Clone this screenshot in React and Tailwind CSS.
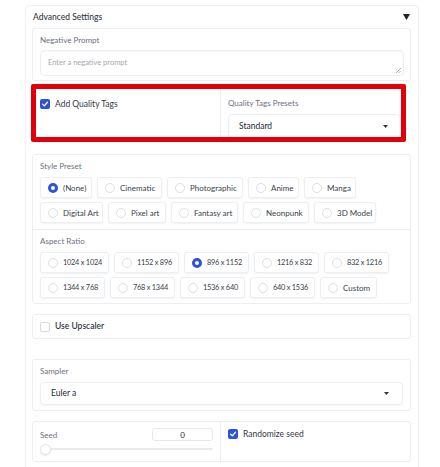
import React from "react";

const Radio = ({ label, w, checked, num }) => (
  <div
    className={`flex items-center h-[21px] rounded-[3px] border border-[#eceef2] bg-white shadow-[0_1px_2px_rgba(0,0,0,0.06)] pl-[7px] gap-[5px] ${w}`}
  >
    {checked ? (
      <span className="w-[10px] h-[10px] rounded-full bg-[#2b55d6] flex items-center justify-center shrink-0">
        <span className="w-[4px] h-[4px] rounded-full bg-white" />
      </span>
    ) : (
      <span className="w-[10px] h-[10px] rounded-full border border-[#dcdfe4] bg-white shrink-0" />
    )}
    <span
      className={`text-[#3a3f4a] whitespace-nowrap leading-none ${
        num ? "text-[7.4px] tracking-[-0.25px]" : "text-[8px]"
      }`}
    >
      {label}
    </span>
  </div>
);

const Check = ({ checked }) =>
  checked ? (
    <span className="w-[10px] h-[10px] rounded-[2px] bg-[#2b55d6] flex items-center justify-center shrink-0">
      <svg width="8" height="8" viewBox="0 0 10 10">
        <path d="M2 5.2 L4.2 7.3 L8 2.8" stroke="white" strokeWidth="1.6" fill="none" strokeLinecap="round" strokeLinejoin="round" />
      </svg>
    </span>
  ) : (
    <span className="w-[10px] h-[10px] rounded-[2px] border border-[#d5d8de] bg-white shrink-0" />
  );

const Caret = () => (
  <svg width="5" height="3" viewBox="0 0 5 3">
    <path d="M0 0 L5 0 L2.5 3 Z" fill="#333" />
  </svg>
);

const Panel = ({ className = "", children }) => (
  <div className={`border border-[#eceef1] rounded-[3px] bg-white ${className}`}>{children}</div>
);

export default function App() {
  return (
    <div
      className="w-[440px] h-[467px] bg-white overflow-hidden pt-[5px] pl-[25px]"
      style={{ fontFamily: "Lato, 'Liberation Sans', sans-serif" }}
    >
      <div className="w-[394px] h-[480px] border border-[#eef0f2] rounded-[4px] pl-[6px] pr-[7px]">
        {/* header */}
        <div className="h-[22px] flex items-center justify-between pl-[1px] pr-[1px]">
          <span className="text-[8.5px] text-[#333844] font-medium leading-none">Advanced Settings</span>
          <svg width="7" height="6" viewBox="0 0 7 6">
            <path d="M0 0 L7 0 L3.5 6 Z" fill="#222" />
          </svg>
        </div>

        {/* negative prompt */}
        <Panel className="h-[53px] pl-[7px] pr-[6px] pt-[6px]">
          <div className="text-[8px] text-[#6b7080] leading-[10px]">Negative Prompt</div>
          <div className="mt-[5px] h-[26px] border border-[#eceef1] rounded-[4px] shadow-[inset_0_1px_2px_rgba(0,0,0,0.04)] flex items-center pl-[7px] relative">
            <span className="text-[7.5px] text-[#a3a7b0] leading-none">Enter a negative prompt</span>
            <svg className="absolute right-[2px] bottom-[2px]" width="5" height="5" viewBox="0 0 5 5">
              <path d="M0 5 L5 0 M2.5 5 L5 2.5" stroke="#999" strokeWidth="0.8" />
            </svg>
          </div>
        </Panel>

        {/* quality tags - highlighted */}
        <div className="mt-[3px] -ml-[1px] w-[375px] h-[58px] border-[5px] border-[#e1000a] rounded-[2px] bg-white flex overflow-hidden">
          <div className="w-[185px] border-r border-[#eceef1] pl-[4px] pt-[10px] flex items-start gap-[5px]">
            <Check checked />
            <span className="text-[8.5px] text-[#333844] leading-[10px]">Add Quality Tags</span>
          </div>
          <div className="flex-1 pl-[7px] pt-[9px]">
            <div className="text-[8px] text-[#6b7080] leading-[10px]">Quality Tags Presets</div>
            <div className="mt-[6px] h-[24px] border border-[#eceef1] rounded-[4px] shadow-[0_1px_2px_rgba(0,0,0,0.05)] flex items-center justify-between pl-[10px] pr-[12px]">
              <span className="text-[8.5px] text-[#222630] leading-none">Standard</span>
              <Caret />
            </div>
          </div>
        </div>

        {/* style preset + aspect ratio */}
        <Panel className="mt-[12px]">
          <div className="pl-[7px] pt-[6px] pb-[6px]">
            <div className="text-[8px] text-[#6b7080] leading-[10px]">Style Preset</div>
            <div className="mt-[6px] flex gap-[5px]">
              <Radio label="(None)" w="w-[52px]" checked />
              <Radio label="Cinematic" w="w-[65px]" />
              <Radio label="Photographic" w="w-[76px]" />
              <Radio label="Anime" w="w-[51px]" />
              <Radio label="Manga" w="w-[52px]" />
            </div>
            <div className="mt-[4px] flex gap-[5px]">
              <Radio label="Digital Art" w="w-[63px]" />
              <Radio label="Pixel art" w="w-[58px]" />
              <Radio label="Fantasy art" w="w-[67px]" />
              <Radio label="Neonpunk" w="w-[66px]" />
              <Radio label="3D Model" w="w-[62px]" />
            </div>
          </div>
          <div className="border-t border-[#eceef1] pl-[7px] pt-[6px] pb-[5px]">
            <div className="text-[8px] text-[#6b7080] leading-[10px]">Aspect Ratio</div>
            <div className="mt-[6px] flex gap-[5px]">
              <Radio num label="1024 x 1024" w="w-[69px]" />
              <Radio num label="1152 x 896" w="w-[65px]" />
              <Radio num label="896 x 1152" w="w-[65px]" checked />
              <Radio num label="1216 x 832" w="w-[65px]" />
              <Radio num label="832 x 1216" w="w-[65px]" />
            </div>
            <div className="mt-[4px] flex gap-[5px]">
              <Radio num label="1344 x 768" w="w-[65px]" />
              <Radio num label="768 x 1344" w="w-[65px]" />
              <Radio num label="1536 x 640" w="w-[65px]" />
              <Radio num label="640 x 1536" w="w-[65px]" />
              <Radio label="Custom" w="w-[57px]" />
            </div>
          </div>
        </Panel>

        {/* upscaler */}
        <Panel className="mt-[10px] h-[25px] pl-[7px] flex items-center gap-[5px]">
          <Check />
          <span className="text-[8.5px] text-[#333844] font-semibold leading-none">Use Upscaler</span>
        </Panel>

        {/* sampler */}
        <Panel className="mt-[20px] h-[52px] pl-[7px] pr-[7px] pt-[6px]">
          <div className="text-[8px] text-[#6b7080] leading-[10px]">Sampler</div>
          <div className="mt-[6px] h-[23px] border border-[#eceef1] rounded-[4px] shadow-[0_1px_2px_rgba(0,0,0,0.05)] flex items-center justify-between pl-[10px] pr-[13px]">
            <span className="text-[8.5px] text-[#222630] leading-none">Euler a</span>
            <Caret />
          </div>
        </Panel>

        {/* seed */}
        <Panel className="mt-[10px] h-[41px] flex">
          <div className="w-[188px] border-r border-[#eceef1] pl-[7px] pr-[7px] pt-[6px]">
            <div className="flex items-center justify-between">
              <span className="text-[8px] text-[#6b7080] leading-[10px]">Seed</span>
              <div className="w-[61px] h-[13px] border border-[#e6e8ec] rounded-[3px] flex items-center justify-center">
                <span className="text-[8px] text-[#222630] leading-none">0</span>
              </div>
            </div>
            <div className="relative mt-[3px] h-[10px] flex items-center">
              <div className="w-full h-[2px] bg-[#e8eaee] rounded-full" />
              <div className="absolute left-0 w-[11px] h-[11px] rounded-full bg-white border border-[#e2e4e8] shadow-[0_1px_2px_rgba(0,0,0,0.08)]" />
            </div>
          </div>
          <div className="flex-1 pl-[7px] pt-[7px] flex items-start gap-[5px]">
            <Check checked />
            <span className="text-[8.5px] text-[#333844] leading-[10px]">Randomize seed</span>
          </div>
        </Panel>
      </div>
    </div>
  );
}
